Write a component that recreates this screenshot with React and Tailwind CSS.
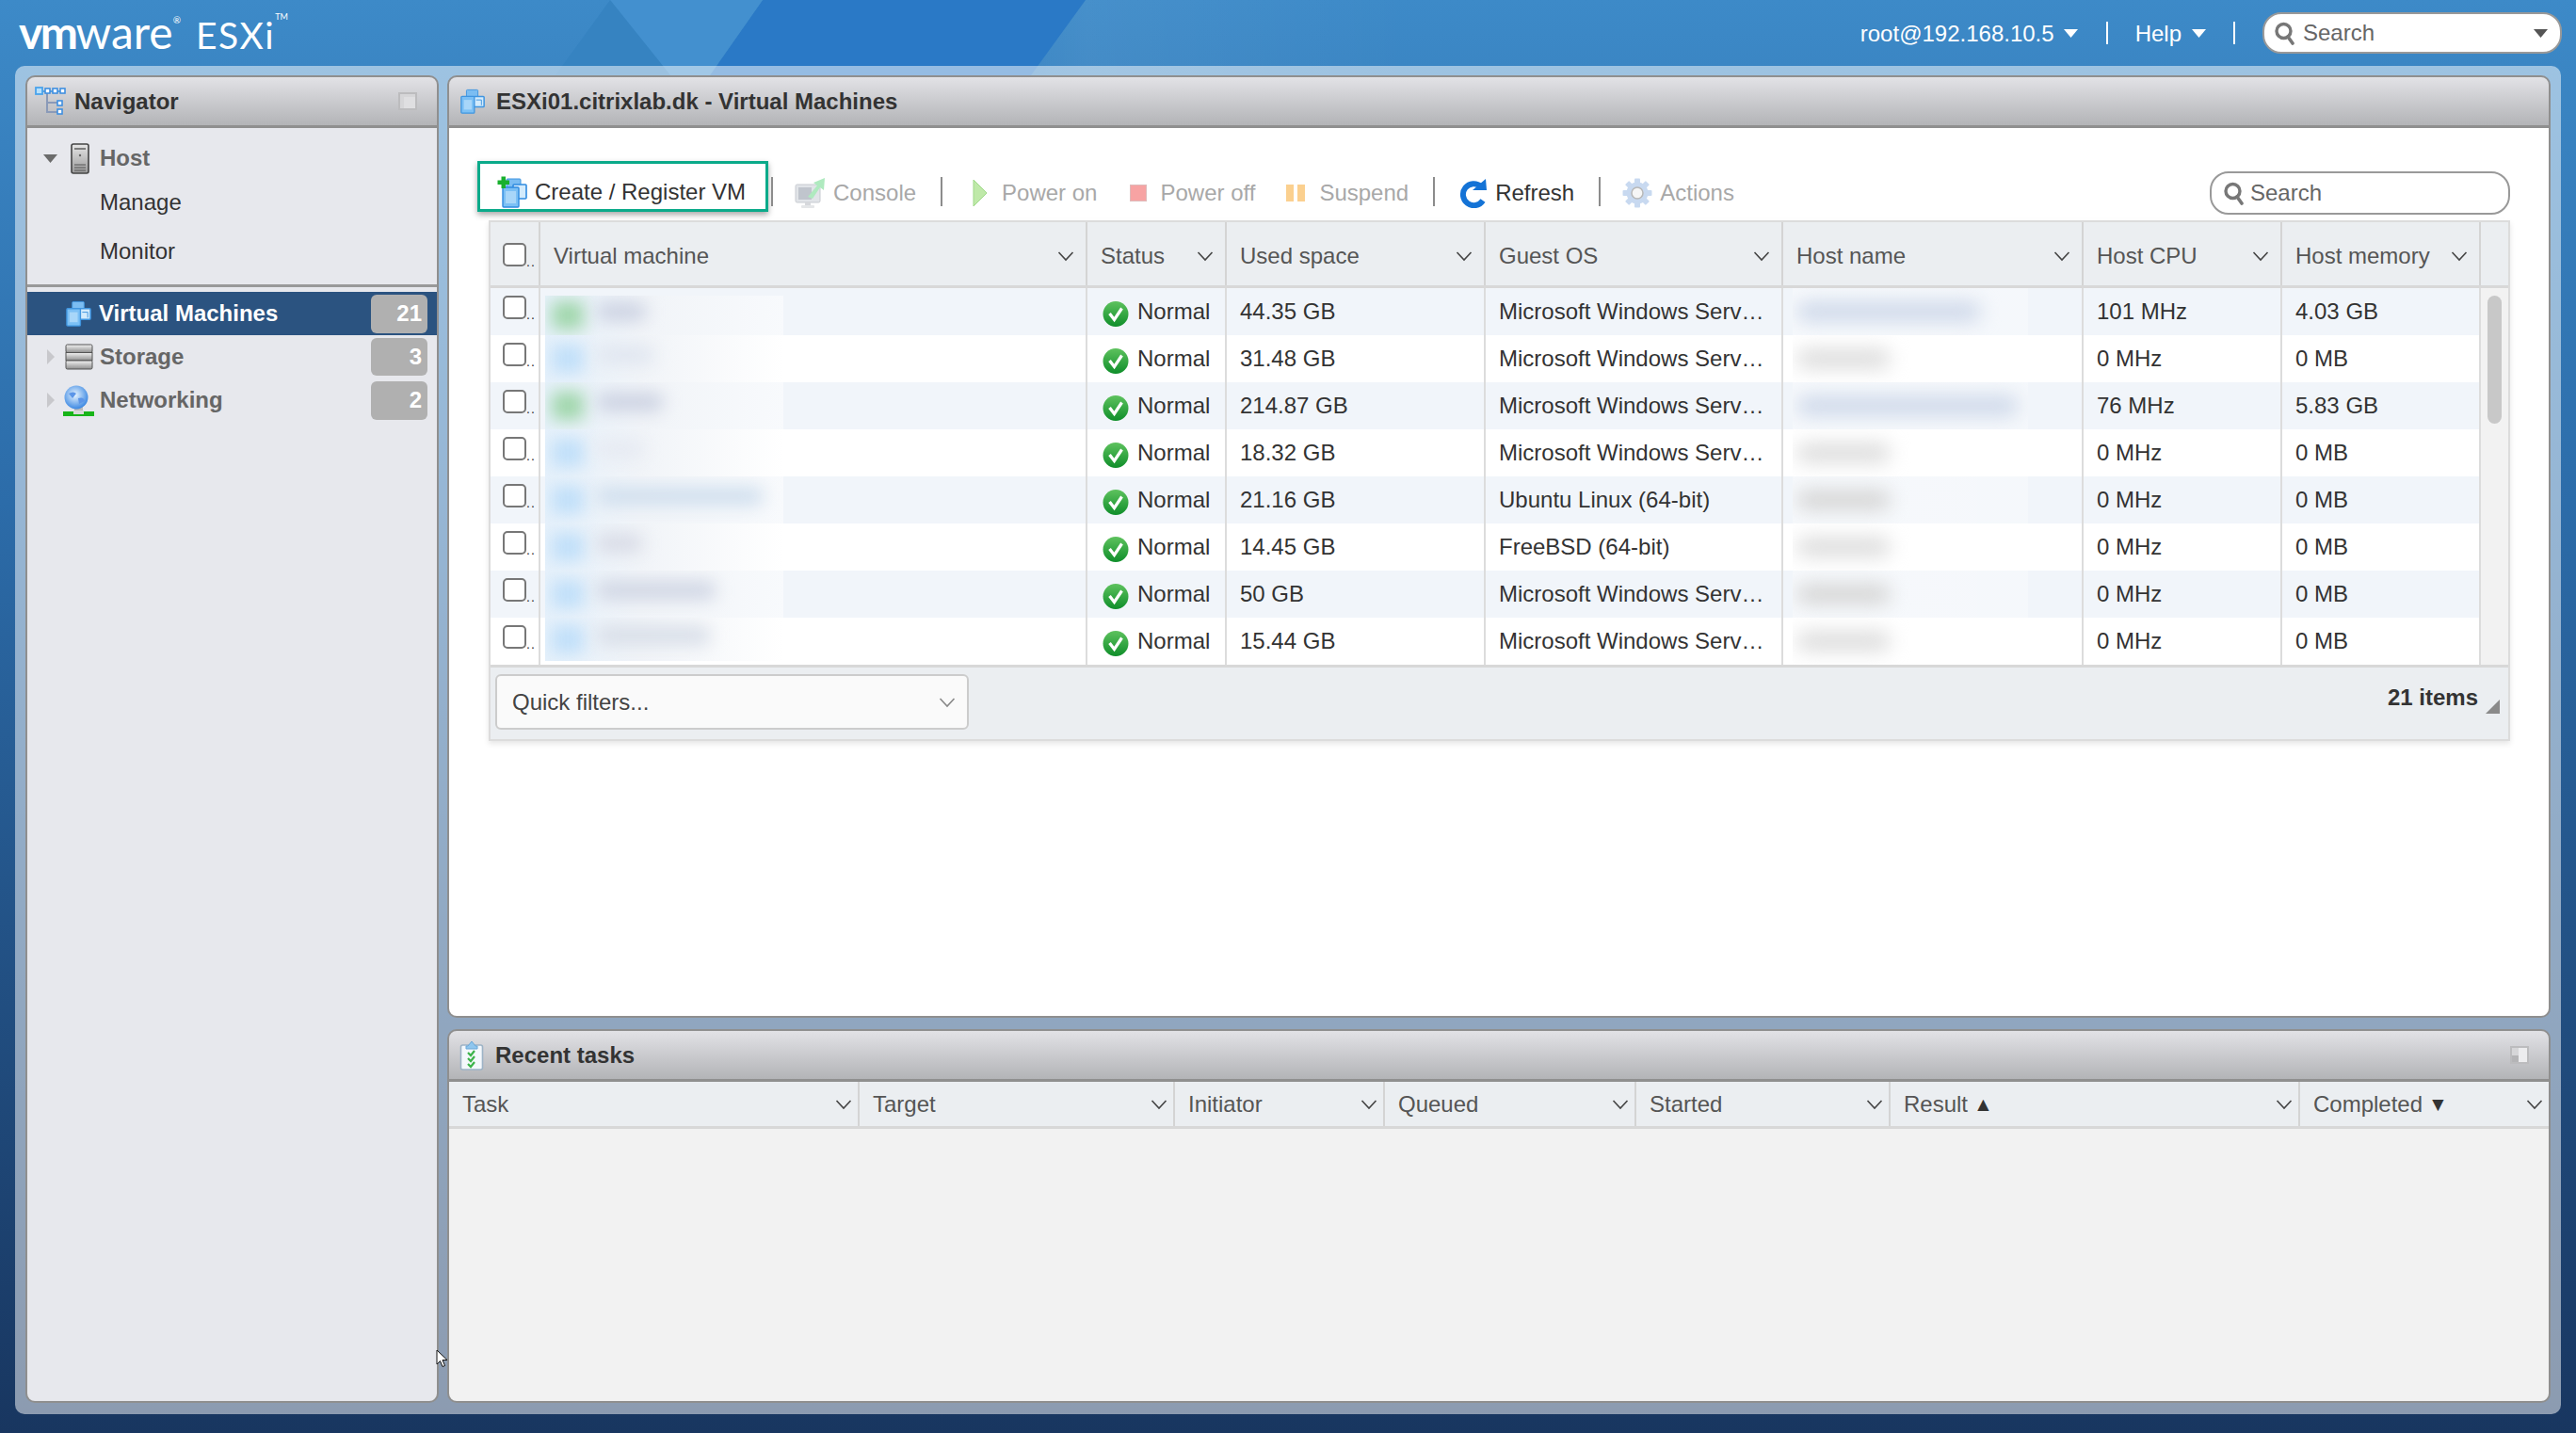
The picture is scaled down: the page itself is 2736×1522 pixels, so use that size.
import React from 'react';

const font = { fontFamily: '"Liberation Sans", Arial, sans-serif' };

function Chevron({ className = 'text-[#444]' }) {
  return (
    <svg width="18" height="12" viewBox="0 0 18 12" className={className}>
      <path d="M1.5 2 L9 10 L16.5 2" fill="none" stroke="currentColor" strokeWidth="1.6" />
    </svg>
  );
}
function Tri({ className = 'text-white', w = 15, h = 9 }) {
  return (
    <svg width={w} height={h} viewBox="0 0 15 9" className={className}>
      <path d="M0 0 H15 L7.5 9 Z" fill="currentColor" />
    </svg>
  );
}
function SearchIcon() {
  return (
    <svg width="24" height="26" viewBox="0 0 24 26">
      <circle cx="10.5" cy="11" r="7.5" fill="#fff" stroke="#777" strokeWidth="3.4" />
      <path d="M15 17 L20 24" stroke="#777" strokeWidth="3.6" strokeLinecap="round" />
    </svg>
  );
}
function VmIcon({ size = 30 }) {
  return (
    <svg width={size} height={size} viewBox="0 0 30 30">
      <rect x="8" y="1.5" width="13" height="11" rx="1" fill="#7bbdf2" stroke="#3f95e0" />
      <rect x="16" y="9" width="12" height="12" rx="1" fill="#d3ebfc" stroke="#3f95e0" strokeWidth="1.6" />
      <rect x="2" y="9" width="15" height="19" rx="1" fill="#7cc0f5" stroke="#3f95e0" strokeWidth="1.4" />
      <rect x="5" y="13" width="9" height="11" fill="#a8d6f9" />
      <path d="M19 13 H25 M25 13 V19" stroke="#3f95e0" fill="none" />
    </svg>
  );
}
function TreeIcon() {
  return (
    <svg width="33" height="32" viewBox="0 0 33 32">
      <path d="M13 6 V27 H24 M13 17 H24" stroke="#8a9ab8" strokeWidth="2" fill="none" />
      <path d="M6 5 H30" stroke="#3f95e0" strokeWidth="1.6" />
      <rect x="1" y="1" width="7" height="7" fill="#b7e0fb" stroke="#4aa3ec" strokeWidth="1.8" />
      <rect x="11" y="2" width="5" height="5" fill="#fff" stroke="#3f8fe0" strokeWidth="1.6" />
      <rect x="19" y="2" width="5" height="5" fill="#fff" stroke="#3f8fe0" strokeWidth="1.6" />
      <rect x="27" y="2" width="5" height="5" fill="#fff" stroke="#3f8fe0" strokeWidth="1.6" />
      <rect x="24" y="15" width="5" height="5" fill="#fff" stroke="#3f8fe0" strokeWidth="1.6" />
      <rect x="24" y="24" width="5" height="5" fill="#fff" stroke="#3f8fe0" strokeWidth="1.6" />
    </svg>
  );
}
function HostIcon() {
  return (
    <svg width="20" height="33" viewBox="0 0 20 33">
      <defs>
        <linearGradient id="hostg" x1="0" x2="0" y1="0" y2="1">
          <stop offset="0" stopColor="#e6e6e6" />
          <stop offset="1" stopColor="#9a9a9a" />
        </linearGradient>
      </defs>
      <rect x="1" y="1" width="18" height="31" rx="2" fill="url(#hostg)" stroke="#444" strokeWidth="1.6" />
      <path d="M4 6 H16" stroke="#666" strokeWidth="1.6" />
      <circle cx="10" cy="13" r="1.2" fill="#666" />
      <path d="M4 23 H16 M4 26 H16 M4 29 H16" stroke="#555" strokeWidth="1.2" />
    </svg>
  );
}
function StorageIcon() {
  return (
    <svg width="30" height="28" viewBox="0 0 30 28">
      <defs>
        <linearGradient id="stg" x1="0" x2="0" y1="0" y2="1">
          <stop offset="0" stopColor="#f2f2f2" />
          <stop offset="1" stopColor="#8e8e8e" />
        </linearGradient>
      </defs>
      <rect x="1" y="1" width="28" height="8.5" rx="1.5" fill="url(#stg)" stroke="#555" />
      <rect x="1" y="9.5" width="28" height="8.5" fill="url(#stg)" stroke="#555" />
      <rect x="1" y="18" width="28" height="9" rx="1.5" fill="url(#stg)" stroke="#555" />
    </svg>
  );
}
function GlobeIcon() {
  return (
    <svg width="33" height="33" viewBox="0 0 33 33">
      <defs>
        <radialGradient id="glb" cx="0.45" cy="0.4" r="0.65">
          <stop offset="0" stopColor="#e9f5ff" />
          <stop offset="1" stopColor="#2d7fe0" />
        </radialGradient>
      </defs>
      <rect x="12" y="23" width="9" height="5" fill="#bbb" />
      <circle cx="14" cy="13" r="12.5" fill="url(#glb)" />
      <path d="M6 9 Q11 6 14 9 L10 14 Z M16 14 Q22 12 23 17 L17 20 Z" fill="#5b95e8" />
      <rect x="0" y="28" width="11" height="5" fill="#18b418" />
      <rect x="11" y="27" width="11" height="4" fill="#d8d8d8" />
      <rect x="22" y="28" width="11" height="5" fill="#18b418" />
      <rect x="0" y="31" width="33" height="2" fill="#18b418" />
    </svg>
  );
}
function TasksIcon() {
  return (
    <svg width="26" height="32" viewBox="0 0 26 32">
      <rect x="1.5" y="5" width="23" height="26" rx="2" fill="#f4f8fc" stroke="#9db3c6" strokeWidth="1.6" />
      <path d="M7 6 L9 6 L13 1 L17 6 L19 6 V9 H7 Z" fill="#8fc6ee" stroke="#6ba8d8" />
      <path d="M9 13 L12 16 L16 11 M9 19 L12 22 L16 17 M9 25 L12 28 L16 23" stroke="#3cb34a" strokeWidth="2.2" fill="none" />
    </svg>
  );
}
function Collapse({ flip = false }) {
  return (
    <svg width="20" height="19" viewBox="0 0 20 19">
      <rect x="1" y="1" width="18" height="17" fill="#d6d6d8" stroke="#bcbcbe" strokeWidth="2" />
      {flip ? (
        <>
          <rect x="9" y="2" width="9" height="15" fill="#ececee" />
          <rect x="2" y="10" width="7" height="7" fill="#b4b4b6" />
        </>
      ) : (
        <rect x="6" y="5" width="12" height="12" fill="#dfdfe1" />
      )}
    </svg>
  );
}
function CheckIcon() {
  return (
    <svg width="28" height="29" viewBox="0 0 28 29">
      <defs>
        <linearGradient id="okg" x1="0" x2="0" y1="0" y2="1">
          <stop offset="0" stopColor="#5ec25e" />
          <stop offset="1" stopColor="#0f8e2a" />
        </linearGradient>
      </defs>
      <circle cx="14" cy="14.5" r="13.5" fill="url(#okg)" />
      <path d="M7.5 14 L12.5 20.5 L20.5 8.5" stroke="#fff" strokeWidth="3.2" fill="none" />
    </svg>
  );
}
function CreateIcon() {
  return (
    <svg width="32" height="34" viewBox="0 0 32 34">
      <rect x="10" y="3" width="15" height="13" rx="1" fill="#7bbdf2" stroke="#3f95e0" />
      <rect x="17" y="9" width="14" height="15" rx="1" fill="#d3ebfc" stroke="#2f8be0" strokeWidth="1.6" />
      <rect x="6" y="12" width="17" height="21" rx="1" fill="#7cc0f5" stroke="#2f8be0" strokeWidth="1.4" />
      <rect x="9" y="16" width="11" height="13" fill="#a8d6f9" />
      <path d="M4.5 0.5 H9 V4.5 H13 V9 H9 V13 H4.5 V9 H0.5 V4.5 H4.5 Z" fill="#19b02e" />
    </svg>
  );
}
function ConsoleIcon() {
  return (
    <svg width="32" height="34" viewBox="0 0 32 34" opacity="0.55">
      <rect x="1" y="8" width="26" height="19" rx="1.5" fill="#c9ced6" stroke="#9aa0aa" />
      <rect x="4" y="11" width="14" height="13" fill="#8d96a5" />
      <rect x="11" y="27" width="6" height="4" fill="#b5b9c0" />
      <rect x="7" y="30" width="14" height="3" rx="1" fill="#cfd2d6" />
      <path d="M14 21 L24 9 L20 6 L32 1 L31 14 L27 11 L19 23 Z" fill="#6ed98b" />
    </svg>
  );
}
function PlayIcon() {
  return (
    <svg width="16" height="30" viewBox="0 0 16 30">
      <path d="M1 1 L15 15 L1 29 Z" fill="#bfe9a9" stroke="#9fd989" />
    </svg>
  );
}
function StopIcon() {
  return (
    <svg width="18" height="18" viewBox="0 0 18 18">
      <rect x="0.5" y="0.5" width="17" height="17" fill="#f7a3a3" stroke="#dbb" />
    </svg>
  );
}
function PauseIcon() {
  return (
    <svg width="21" height="18" viewBox="0 0 21 18">
      <rect x="0" y="0" width="8" height="18" fill="#fbd08f" />
      <rect x="12" y="0" width="8" height="18" fill="#fbd08f" />
    </svg>
  );
}
function RefreshIcon() {
  return (
    <svg width="30" height="31" viewBox="0 0 30 31">
      <path d="M23 8 A11.5 11.5 0 1 0 25 23" fill="none" stroke="#1473d6" strokeWidth="6" />
      <path d="M14 12 L29 12 L28 0 Z" fill="#1473d6" />
    </svg>
  );
}
function GearIcon() {
  return (
    <svg width="32" height="32" viewBox="0 0 32 32" opacity="0.62">
      <g fill="#a8c3e8">
        <circle cx="16" cy="16" r="11.5" />
        <rect x="13" y="0.5" width="6" height="31" rx="1" />
        <rect x="13" y="0.5" width="6" height="31" rx="1" transform="rotate(45 16 16)" />
        <rect x="13" y="0.5" width="6" height="31" rx="1" transform="rotate(90 16 16)" />
        <rect x="13" y="0.5" width="6" height="31" rx="1" transform="rotate(135 16 16)" />
      </g>
      <circle cx="16" cy="16" r="6" fill="#f2f2f2" stroke="#8d8d8d" strokeWidth="1.5" />
    </svg>
  );
}

function PanelHeader({ icon, title, right, titlePad = 'pt-[1px]' }) {
  return (
    <div className="h-[56px] shrink-0 flex items-center bg-gradient-to-b from-[#e2e2e6] to-[#b3b4b7] border-2 border-b-[3px] border-[#8f8f8f] rounded-t-[10px]">
      {icon}
      <span className={`font-bold text-[#333] whitespace-nowrap ${titlePad}`}>{title}</span>
      {right}
    </div>
  );
}

const WIN = 'Microsoft Windows Serv…';
const rows = [
  { vmC: 'bg-[#9fd6aa]', vmB: 'w-[54px] bg-[#ccd2e2]', hostB: 'w-[196px] bg-[#cfd9ea]', used: '44.35 GB', os: WIN, cpu: '101 MHz', mem: '4.03 GB', block: 'mt-[8px] h-[42px]' },
  { vmC: 'bg-[#c0dff9]', vmB: 'w-[62px] bg-[#e0e6f0]', hostB: 'w-[100px] bg-[#dedede]', used: '31.48 GB', os: WIN, cpu: '0 MHz', mem: '0 MB', block: 'h-full' },
  { vmC: 'bg-[#9fd6aa]', vmB: 'w-[72px] bg-[#ccd2e2]', hostB: 'w-[236px] bg-[#cfd9ea]', used: '214.87 GB', os: WIN, cpu: '76 MHz', mem: '5.83 GB', block: 'h-full' },
  { vmC: 'bg-[#c0dff9]', vmB: 'w-[52px] bg-[#e6eaf2]', hostB: 'w-[100px] bg-[#dedede]', used: '18.32 GB', os: WIN, cpu: '0 MHz', mem: '0 MB', block: 'h-full' },
  { vmC: 'bg-[#c0dff9]', vmB: 'w-[178px] bg-[#d0dfee]', hostB: 'w-[100px] bg-[#d6d6d6]', used: '21.16 GB', os: 'Ubuntu Linux (64-bit)', cpu: '0 MHz', mem: '0 MB', block: 'h-full' },
  { vmC: 'bg-[#c0dff9]', vmB: 'w-[50px] bg-[#d8dbe6]', hostB: 'w-[100px] bg-[#dedede]', used: '14.45 GB', os: 'FreeBSD (64-bit)', cpu: '0 MHz', mem: '0 MB', block: 'h-full' },
  { vmC: 'bg-[#c0dff9]', vmB: 'w-[128px] bg-[#d0d6e4]', hostB: 'w-[100px] bg-[#d6d6d6]', used: '50 GB', os: WIN, cpu: '0 MHz', mem: '0 MB', block: 'h-full' },
  { vmC: 'bg-[#c0dff9]', vmB: 'w-[122px] bg-[#d8dee8]', hostB: 'w-[100px] bg-[#dedede]', used: '15.44 GB', os: WIN, cpu: '0 MHz', mem: '0 MB', block: 'h-[46px]' },
];

function Box() {
  return (
    <div className="w-[53px] shrink-0 h-full border-r-2 border-[#dcdcdc] flex items-start pl-[13px] pt-[8px] overflow-hidden">
      <span className="w-[25px] h-[25px] shrink-0 rounded-[5px] border-2 border-[#777] bg-white" />
      <span className="text-[14px] leading-[25px] text-[#333] pt-[8px] tracking-[1px] whitespace-nowrap">..</span>
    </div>
  );
}

function HeadCell({ className, label, pad = 'pl-[14px] pr-[12px] pt-[4px]', border = true }) {
  return (
    <div className={`${className} ${pad} shrink-0 h-full flex items-center justify-between ${border ? 'border-r-2 border-[#d4d4d4]' : ''}`}>
      <span className="text-[#555] whitespace-nowrap flex items-center gap-[6px]">{label}</span>
      <Chevron />
    </div>
  );
}

const taskCols = [
  ['w-[436px]', 'Task'],
  ['w-[335px]', 'Target'],
  ['w-[223px]', 'Initiator'],
  ['w-[267px]', 'Queued'],
  ['w-[270px]', 'Started'],
  ['w-[435px]', <>Result <span className="text-[#333] text-[21px]">▲</span></>],
  ['w-[264px]', <>Completed <span className="text-[#333] text-[21px]">▼</span></>],
];

function ToolItem({ icon, label, disabled, className = '' }) {
  return (
    <div className={`flex items-center whitespace-nowrap ${className}`}>
      {icon}
      <span className={disabled ? 'text-[#a8a8a8]' : 'text-[#333]'}>{label}</span>
    </div>
  );
}

function ToolSep({ className }) {
  return <div className={`w-[2px] h-[31px] bg-[#8c8c8c] shrink-0 ${className}`} />;
}

export default function App() {
  return (
    <div style={font} className="relative w-[2736px] h-[1522px] overflow-hidden flex flex-col text-[24px] bg-gradient-to-b from-[#3d8ac8] via-[#2c6ca9] via-35% to-[#183660]">
      {/* background facets behind the top bar */}
      <div className="absolute left-0 top-0 w-[1500px] h-[80px] bg-[#2a79c6] [clip-path:polygon(810px_0,1153px_0,1095px_80px,754px_80px)]" />
      <div className="absolute left-0 top-0 w-[1500px] h-[80px] bg-[#4390cf] [clip-path:polygon(648px_0,810px_0,754px_80px,712px_80px)]" />
      <div className="absolute left-0 top-0 w-[1500px] h-[80px] bg-[#3683c1] [clip-path:polygon(648px_0,712px_80px,590px_80px)]" />
      <div className="absolute left-0 top-0 w-[1500px] h-[80px] bg-gradient-to-r from-transparent from-70% to-transparent via-white/5 via-77% [clip-path:polygon(1153px_0,1500px_0,1500px_80px,1095px_80px)]" />

      {/* top bar */}
      <header className="relative h-[70px] shrink-0 flex items-center text-white">
        <div className="flex items-baseline ml-[20px] -mt-[2px] whitespace-nowrap" style={{ fontFamily: 'Lato, sans-serif' }}>
          <span className="font-bold text-[48px] leading-none tracking-[-2.5px]">vm</span>
          <span className="text-[48px] leading-none">ware</span>
          <span className="text-[10px] self-start mt-[4px]">®</span>
          <span className="ml-[16px] text-[39px] leading-none tracking-[1.5px]">ESXi</span>
          <span className="text-[9px] self-start mt-[1px]">TM</span>
        </div>
        <div className="ml-auto flex items-center">
          <span className="whitespace-nowrap pt-[2px]">root@192.168.10.5</span>
          <Tri className="ml-[10px] text-white" />
          <div className="ml-[30px] w-[2px] h-[24px] bg-white" />
          <span className="ml-[29px] pt-[2px]">Help</span>
          <Tri className="ml-[11px] text-white" />
          <div className="ml-[29px] w-[2px] h-[24px] bg-white" />
          <div className="ml-[29px] mr-[15px] w-[318px] h-[44px] rounded-[20px] bg-white border-2 border-[#999] flex items-center pl-[10px] pr-[13px] shrink-0">
            <SearchIcon />
            <span className="ml-[7px] text-[#666]">Search</span>
            <Tri className="ml-auto text-[#555]" />
          </div>
        </div>
      </header>

      {/* glass frame */}
      <div className="relative flex-1 mx-[16px] mb-[20px] bg-white/50 rounded-[10px] flex gap-[9px] pt-[10px] pb-[12px] pl-[11px] pr-[11px] min-h-0">
        {/* navigator */}
        <aside className="w-[439px] shrink-0 flex flex-col">
          <PanelHeader
            icon={<span className="ml-[8px] mr-[9px] flex"><TreeIcon /></span>}
            title="Navigator"
            right={<span className="ml-auto mr-[21px] flex"><Collapse /></span>}
          />
          <div className="flex-1 bg-[#e7e8ed] border-2 border-t-0 border-[#8f8f8f] rounded-b-[10px] flex flex-col">
            <div className="h-[169px] shrink-0 border-b-[3px] border-[#999] flex flex-col">
              <div className="h-[50px] mt-[7px] flex items-center">
                <Tri className="ml-[17px] text-[#6b6b6b]" />
                <span className="ml-[14px] flex"><HostIcon /></span>
                <span className="ml-[11px] font-bold text-[#666]">Host</span>
              </div>
              <div className="h-[44px] flex items-center pl-[77px] text-[#333]">Manage</div>
              <div className="h-[60px] flex items-center pl-[77px] text-[#333]">Monitor</div>
            </div>
            <div className="h-[46px] mt-[5px] bg-[#2b5380] flex items-center">
              <span className="ml-[40px] flex"><VmIcon size={29} /></span>
              <span className="ml-[7px] font-bold text-white whitespace-nowrap">Virtual Machines</span>
              <span className="ml-auto mr-[10px] w-[60px] h-[41px] rounded-[6px] bg-[#b0b0b0] text-white font-bold flex items-center justify-end pr-[6px]">21</span>
            </div>
            <div className="h-[46px] flex items-center">
              <svg width="8" height="16" viewBox="0 0 8 16" className="ml-[21px] text-[#c8c8cc]"><path d="M0 0 L8 8 L0 16 Z" fill="currentColor" /></svg>
              <span className="ml-[11px] flex"><StorageIcon /></span>
              <span className="ml-[7px] font-bold text-[#666]">Storage</span>
              <span className="ml-auto mr-[10px] w-[60px] h-[40px] rounded-[6px] bg-[#b0b0b0] text-white font-bold flex items-center justify-end pr-[6px]">3</span>
            </div>
            <div className="h-[46px] flex items-center">
              <svg width="8" height="16" viewBox="0 0 8 16" className="ml-[21px] text-[#c8c8cc]"><path d="M0 0 L8 8 L0 16 Z" fill="currentColor" /></svg>
              <span className="ml-[9px] flex"><GlobeIcon /></span>
              <span className="ml-[6px] font-bold text-[#666]">Networking</span>
              <span className="ml-auto mr-[10px] w-[60px] h-[41px] rounded-[6px] bg-[#b0b0b0] text-white font-bold flex items-center justify-end pr-[6px]">2</span>
            </div>
          </div>
        </aside>

        {/* right column */}
        <div className="flex-1 min-w-0 flex flex-col gap-[12px]">
          <main className="h-[1001px] shrink-0 flex flex-col">
            <PanelHeader
              icon={<span className="ml-[11px] mr-[11px] flex"><VmIcon size={28} /></span>}
              title="ESXi01.citrixlab.dk - Virtual Machines"
            />
            <div className="flex-1 bg-white border-2 border-t-0 border-[#8f8f8f] rounded-b-[10px] pl-[30px] flex flex-col">
              {/* toolbar */}
              <div className="h-[63px] mt-[35px] flex items-start pr-[41px]">
                <div className="w-[309px] h-[54px] shrink-0 border-[3px] border-[#0aaa8a] shadow-[0_3px_6px_rgba(0,0,0,0.35)] flex items-center pl-[18px] pt-[11px] bg-white whitespace-nowrap text-[#333]">
                  <span className="mr-[8px] flex"><CreateIcon /></span>
                  Create / Register VM
                </div>
                <div className="h-[54px] mt-[7px] flex items-center flex-1">
                  <ToolSep className="ml-[3px] -mt-[3px]" />
                  <ToolItem disabled className="ml-[23px]" icon={<span className="mr-[9px] flex"><ConsoleIcon /></span>} label="Console" />
                  <ToolSep className="ml-[26px] -mt-[3px]" />
                  <ToolItem disabled className="ml-[32px]" icon={<span className="mr-[15px] flex"><PlayIcon /></span>} label="Power on" />
                  <ToolItem disabled className="ml-[35px]" icon={<span className="mr-[14px] flex"><StopIcon /></span>} label="Power off" />
                  <ToolItem disabled className="ml-[33px]" icon={<span className="mr-[14px] flex"><PauseIcon /></span>} label="Suspend" />
                  <ToolSep className="ml-[26px] -mt-[3px]" />
                  <ToolItem className="ml-[26px]" icon={<span className="mr-[8px] flex"><RefreshIcon /></span>} label="Refresh" />
                  <ToolSep className="ml-[26px] -mt-[3px]" />
                  <ToolItem disabled className="ml-[23px]" icon={<span className="mr-[8px] flex"><GearIcon /></span>} label="Actions" />
                  <div className="ml-auto w-[319px] h-[46px] rounded-[20px] bg-white border-2 border-[#999] flex items-center pl-[12px]">
                    <SearchIcon />
                    <span className="ml-[5px] text-[#666]">Search</span>
                  </div>
                </div>
              </div>

              {/* table */}
              <div className="w-[2147px] ml-[12px] border-2 border-[#dcdcdc] shadow-[0_3px_6px_rgba(0,0,0,0.1)] flex flex-col">
                <div className="h-[70px] bg-[#ebeef1] border-b-[3px] border-[#d8d8d8] flex">
                  <div className="w-[53px] shrink-0 h-full border-r-2 border-[#d4d4d4] flex items-start pt-[22px] pl-[13px] overflow-hidden">
                    <span className="w-[25px] h-[25px] shrink-0 rounded-[5px] border-2 border-[#777] bg-white" />
                    <span className="text-[14px] leading-[25px] text-[#333] pt-[8px] tracking-[1px] whitespace-nowrap">..</span>
                  </div>
                  <HeadCell className="w-[581px]" label="Virtual machine" />
                  <HeadCell className="w-[148px]" label="Status" />
                  <HeadCell className="w-[275px]" label="Used space" />
                  <HeadCell className="w-[316px]" label="Guest OS" />
                  <HeadCell className="w-[319px]" label="Host name" />
                  <HeadCell className="w-[211px]" label="Host CPU" />
                  <HeadCell className="w-[211px]" label="Host memory" />
                </div>
                <div className="flex">
                  <div className="w-[2114px] shrink-0 flex flex-col">
                    {rows.map((r, i) => (
                      <div key={i} className={`h-[50px] flex items-center ${i % 2 === 0 ? 'bg-[#f1f5fa]' : 'bg-white'}`}>
                        <Box />
                        <div className="w-[581px] shrink-0 h-full border-r-2 border-[#dcdcdc] pl-[5px]">
                          <div className={`w-[253px] ${r.block} bg-gradient-to-r from-[#e6f1fb] via-[#f1f4f8] via-40% to-white/50 flex items-center overflow-hidden`}>
                            <div className={`ml-[7px] w-[34px] h-[30px] shrink-0 blur-[9px] ${r.vmC}`} />
                            <div className={`ml-[13px] -mt-[8px] h-[20px] shrink-0 rounded-full blur-[9px] ${r.vmB}`} />
                          </div>
                        </div>
                        <div className="w-[148px] shrink-0 h-full border-r-2 border-[#dcdcdc] flex items-center pl-[16px] text-[#333]">
                          <span className="mt-[5px] flex mr-[9px]"><CheckIcon /></span>
                          <span>Normal</span>
                        </div>
                        <div className="w-[275px] shrink-0 h-full border-r-2 border-[#dcdcdc] flex items-center pl-[14px] text-[#333]">{r.used}</div>
                        <div className="w-[316px] shrink-0 h-full border-r-2 border-[#dcdcdc] flex items-center pl-[14px] text-[#333] whitespace-nowrap">{r.os}</div>
                        <div className="w-[319px] shrink-0 h-full border-r-2 border-[#dcdcdc] pl-[10px]">
                          <div className="w-[250px] h-full bg-gradient-to-r from-white/40 to-white/30 flex items-center overflow-hidden">
                            <div className={`ml-[4px] h-[22px] shrink-0 rounded-full blur-[10px] ${r.hostB}`} />
                          </div>
                        </div>
                        <div className="w-[211px] shrink-0 h-full border-r-2 border-[#dcdcdc] flex items-center pl-[14px] text-[#333]">{r.cpu}</div>
                        <div className="w-[211px] shrink-0 h-full border-r-2 border-[#dcdcdc] flex items-center pl-[14px] text-[#333]">{r.mem}</div>
                      </div>
                    ))}
                  </div>
                  <div className="flex-1 bg-[#f2f2f2] pt-[8px] flex justify-center">
                    <div className="w-[15px] h-[136px] rounded-full bg-[#c8c8c8]" />
                  </div>
                </div>
                <div className="h-[79px] bg-[#ebeef1] border-t-[3px] border-[#d8d8d8] flex items-start pl-[5px] pr-[8px]">
                  <div className="mt-[7px] w-[503px] h-[59px] rounded-[6px] border-2 border-[#ccc] bg-[#fafafa] flex items-center justify-between pl-[16px] pr-[12px] text-[#444]">
                    Quick filters...
                    <Chevron className="text-[#888]" />
                  </div>
                  <div className="ml-auto flex items-start mt-[14px]">
                    <span className="font-bold text-[#333] whitespace-nowrap">21 items</span>
                    <svg width="16" height="16" viewBox="0 0 16 16" className="ml-[8px] mt-[20px]">
                      <path d="M15 0 V15 H0 Z" fill="#8a8a8a" />
                    </svg>
                  </div>
                </div>
              </div>
            </div>
          </main>

          <section className="flex-1 min-h-0 flex flex-col">
            <PanelHeader
              icon={<span className="ml-[11px] mr-[12px] flex"><TasksIcon /></span>}
              title="Recent tasks"
              titlePad=""
              right={<span className="ml-auto mr-[21px] flex"><Collapse flip /></span>}
            />
            <div className="flex-1 bg-[#f2f2f2] border-2 border-t-0 border-[#8f8f8f] rounded-b-[10px] flex flex-col overflow-hidden">
              <div className="h-[50px] bg-[#ebeef1] border-b-[3px] border-[#d8d8d8] flex">
                {taskCols.map(([w, label], i) => (
                  <HeadCell key={i} className={w} label={label} pad="pl-[14px] pr-[6px]" border={i < taskCols.length - 1} />
                ))}
              </div>
            </div>
          </section>
        </div>
      </div>

      {/* mouse pointer */}
      <svg width="13" height="20" viewBox="0 0 13 20" className="absolute left-[463px] top-[1433px]">
        <path d="M1 1 V16 L4.5 12.5 L7 18.5 L9.5 17.5 L7 11.5 L12 11.5 Z" fill="#fff" stroke="#111" strokeWidth="1" />
      </svg>
    </div>
  );
}
